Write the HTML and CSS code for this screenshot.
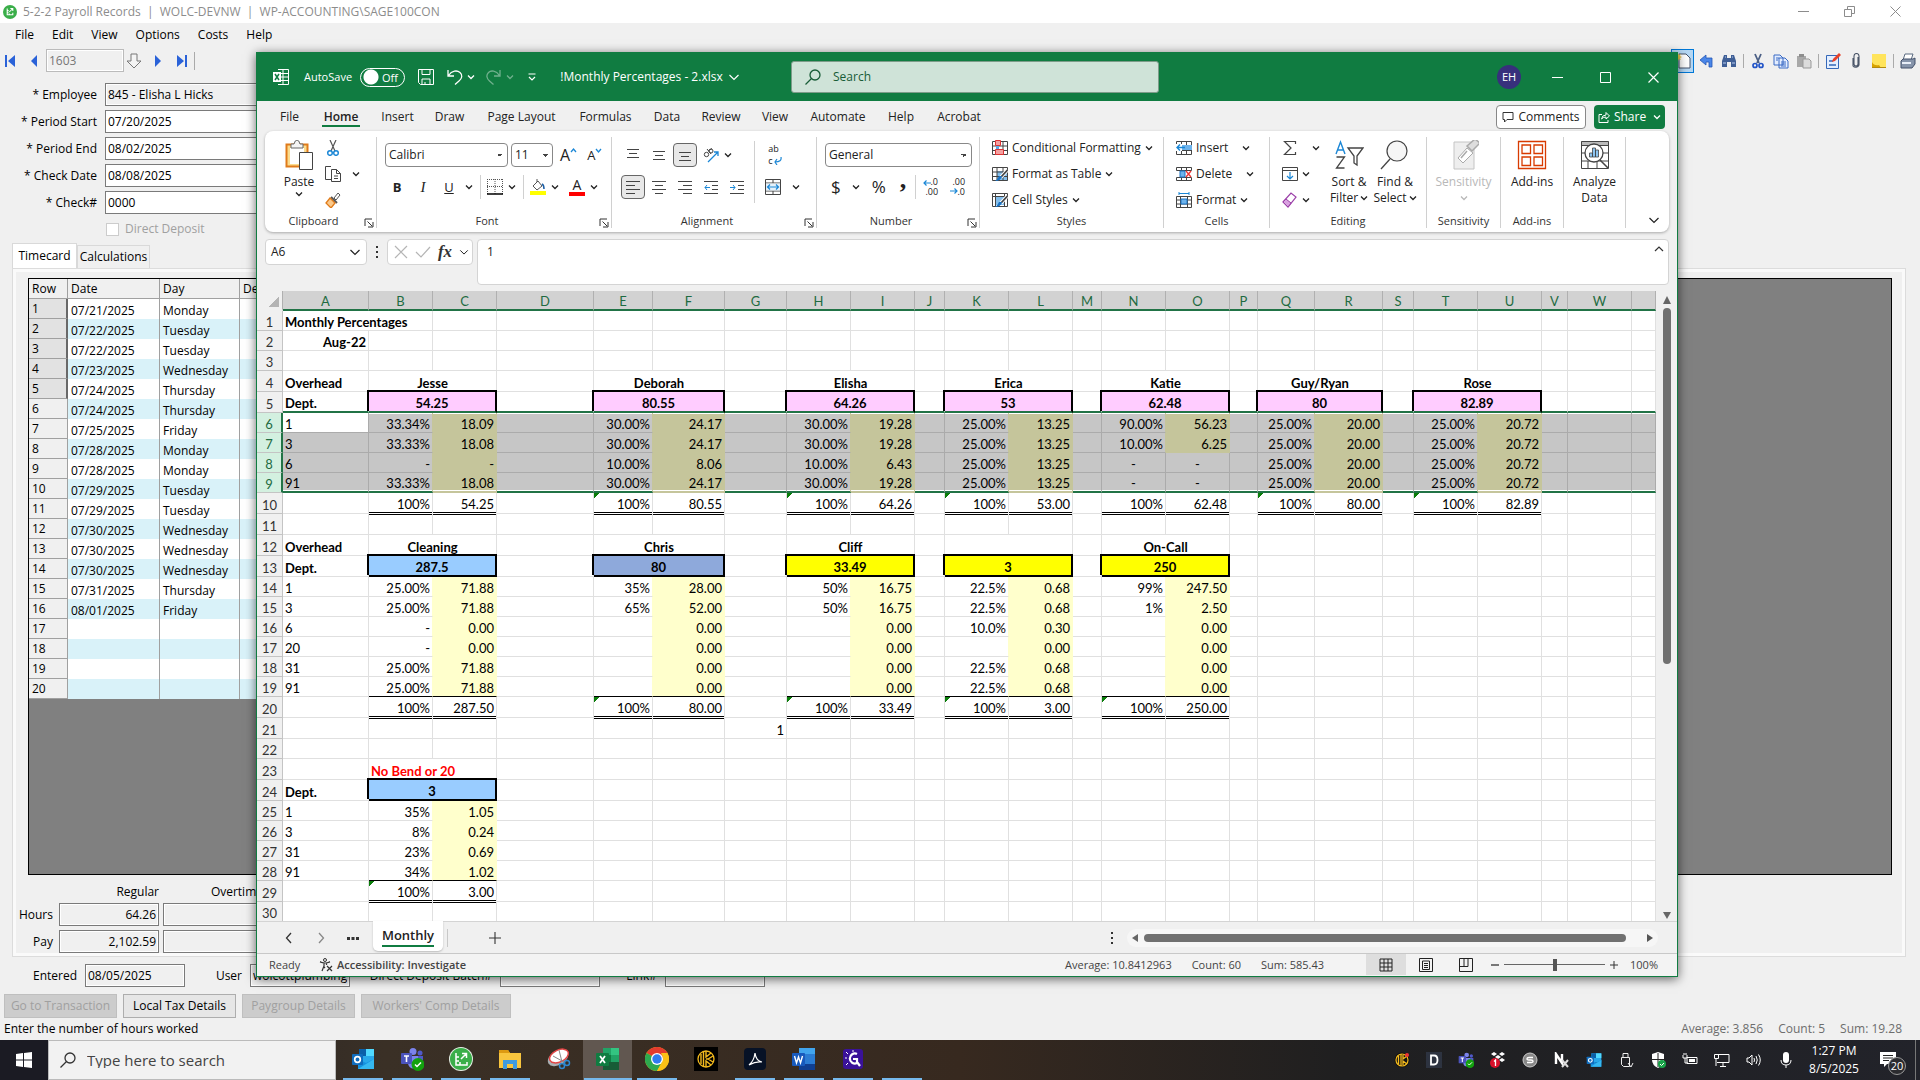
FILE: index.html
```html
<!DOCTYPE html>
<html lang="en">
<head>
<meta charset="utf-8">
<title>5-2-2 Payroll Records</title>
<link rel="stylesheet" href="styles.css">
</head>
<body>
<svg class="defs" aria-hidden="true">
  <symbol id="chev" viewBox="0 0 8 8"><path d="M1 2.5 4 5.5 7 2.5" fill="none" stroke="currentColor" stroke-width="1.3"/></symbol>
  <symbol id="chev-lg" viewBox="0 0 12 12"><path d="M1.500 4 6 8.500 10.500 4" fill="none" stroke="currentColor" stroke-width="1.200"/></symbol>
  <symbol id="launch" viewBox="0 0 10 10"><path d="M1 8V1h7M3.500 3.500 8 8M9 4v5H4" fill="none" stroke="currentColor"/></symbol>
  <symbol id="mag" viewBox="0 0 18 18"><circle cx="11" cy="7" r="5" fill="none" stroke="currentColor" stroke-width="1.300"/><path d="M7.500 10.500 1.500 16.500" stroke="currentColor" stroke-width="1.300"/></symbol>
  <symbol id="sage" viewBox="0 0 20 20"><circle cx="10" cy="10" r="10" fill="#3aae49"/><path d="M6 5v9h8v-3M6 8h2M6 11h2M9 14v-2M9 10l5-5M10.500 5H14v3.500" fill="none" stroke="#fff" stroke-width="1.500"/></symbol>
  <symbol id="outlook" viewBox="0 0 24 24"><path d="M8 2h15v14H8z" fill="#28a8ea"/><path d="M8 2h7v7H8z" fill="#0a5fa8"/><path d="M15 2h8v7h-8z" fill="#50d9ff"/><path d="M7 12l8 4 8-4v10H7z" fill="#1490df"/><path d="M7 22l16-10v10z" fill="#35b8f1"/><rect x="1" y="7" width="11" height="11" rx="1" fill="#0f6cbd"/><circle cx="6.500" cy="12.500" r="2.800" fill="none" stroke="#fff" stroke-width="1.700"/></symbol>
  <symbol id="teams" viewBox="0 0 24 24"><circle cx="13" cy="4.500" r="3.500" fill="#7b83eb"/><circle cx="20" cy="6" r="2.500" fill="#5059c9"/><path d="M8 9h11v7a5 5 0 0 1-11 0z" fill="#7b83eb"/><path d="M18 9h5v5a3 3 0 0 1-5 2z" fill="#5059c9"/><rect x="1" y="6" width="11" height="11" rx="1" fill="#4b53bc"/><path d="M4 9h5M6.500 9v6" stroke="#fff" stroke-width="1.600"/><circle cx="18" cy="17.500" r="6.500" fill="#13a10e"/><path d="M15 17.500l2 2 4-4" fill="none" stroke="#fff" stroke-width="1.500"/></symbol>
</svg>

<main class="payroll">
  <header class="app-title">
    <svg class="i14"><use href="#sage"/></svg>
    <span class="app-name">5-2-2 Payroll Records&nbsp; |&nbsp; WOLC-DEVNW&nbsp; |&nbsp; WP-ACCOUNTING\SAGE100CON</span>
    <div class="win-ctl grey">
      <button aria-label="Minimize"><svg viewBox="0 0 11 11"><path d="M0 5.500h11" stroke="currentColor"/></svg></button>
      <button aria-label="Restore"><svg viewBox="0 0 11 11"><path d="M.5 3.500h7v7h-7zM3.500 3V.5h7v7H8" fill="none" stroke="currentColor"/></svg></button>
      <button aria-label="Close"><svg viewBox="0 0 11 11"><path d="M.5.5l10 10M10.500.5l-10 10" stroke="currentColor"/></svg></button>
    </div>
  </header>
  <nav class="app-menu">
    <button>File</button><button>Edit</button><button>View</button><button>Options</button><button>Costs</button><button>Help</button>
  </nav>
  <div class="app-tools">
    <button aria-label="First"><svg viewBox="0 0 12 12"><path d="M1 0h2v12H1zM11 0v12L4 6z" fill="#2a62d8"/></svg></button>
    <button class="prev" aria-label="Previous"><svg viewBox="0 0 12 12"><path d="M9 0v12L3 6z" fill="#2a62d8"/></svg></button>
    <input class="field rec-no" aria-label="Record" value="1603" readonly>
    <button class="wide" aria-label="Load"><svg viewBox="0 0 16 16"><path d="M5 1h6v7h4l-7 7-7-7h4z" fill="#f4f4f4" stroke="#777"/></svg></button>
    <button aria-label="Next"><svg viewBox="0 0 12 12"><path d="M3 0v12l6-6z" fill="#2a62d8"/></svg></button>
    <button class="prev" aria-label="Last"><svg viewBox="0 0 12 12"><path d="M9 0h2v12H9zM1 0v12l7-6z" fill="#2a62d8"/></svg></button>
    <span class="vsep"></span>
    <div class="right-tools">
      <button class="hot" aria-label="New"><svg viewBox="0 0 16 16"><path d="M4 1h7l4 4v10H4z" fill="#fff" stroke="#44526a"/><path d="M3 0l1 2 2-1-1 2 2 1-2 1 1 2-2-1-1 2-1-2-2 1 1-2-2-1 2-1-1-2 2 1z" fill="#e9c44a"/></svg></button>
      <button aria-label="Undo"><svg viewBox="0 0 16 16"><path d="M2 7l6-5v3h6v9h-3V9H8v3z" fill="#4a86e8" stroke="#2355b5" stroke-width=".8"/></svg></button>
      <button aria-label="Find"><svg viewBox="0 0 16 16"><path d="M3 2h3v3h4V2h3l2 6v6h-5V9H6v5H1V8z" fill="#3f5f96"/><path d="M2 10h3M11 10h3M4 4h1M11 4h1" stroke="#b9cdf0"/></svg></button>
      <span class="vsep"></span>
      <button aria-label="Cut"><svg viewBox="0 0 16 16"><path d="M5 1l4 9M11 1l-4 9" stroke="#4b5f85" stroke-width="1.800"/><circle cx="5" cy="12.500" r="2" fill="none" stroke="#2355c8" stroke-width="1.700"/><circle cx="11" cy="12.500" r="2" fill="none" stroke="#2355c8" stroke-width="1.700"/></svg></button>
      <button aria-label="Copy"><svg viewBox="0 0 16 16"><path d="M1 2h6l3 3v7H1zM6 5h6l3 3v7H6z" fill="#e3edff" stroke="#3a6ac4"/><path d="M8 9h5M8 11h5M8 13h5M3 5h3M3 7h2" stroke="#3a6ac4"/></svg></button>
      <button aria-label="Paste"><svg viewBox="0 0 16 16"><path d="M1 3h9v11H1z" fill="#a8a8a8"/><path d="M3 1h5v3H3z" fill="#8d8d8d"/><path d="M7 6h6l2 2v7H7z" fill="#dcdcdc" stroke="#999"/></svg></button>
      <span class="vsep"></span>
      <button aria-label="Edit"><svg viewBox="0 0 16 16"><path d="M1.500 2.500h12v13h-12z" fill="#e3eeff" stroke="#3568b8"/><path d="M4 8h4M4 12h7" stroke="#3568b8" stroke-width="1.500"/><path d="M7 9l1-3 6-6 2 2-6 6z" fill="#e8412a"/></svg></button>
      <button aria-label="Attach"><svg viewBox="0 0 16 16"><path d="M10 4v7a2 2 0 0 1-4 0V3a2.500 2.500 0 0 1 5 0v9a3.500 3.500 0 0 1-6 1V5" fill="none" stroke="#4a5568" stroke-width="1.100"/></svg></button>
      <button aria-label="Note"><svg viewBox="0 0 16 16"><path d="M1 1h14v14H1z" fill="#ffe45c"/><path d="M1 15V9q2 4 7 3l2 3z" fill="#d9a300"/><path d="M1 14h14v1H1z" fill="#b28a10"/></svg></button>
      <span class="vsep"></span>
      <button aria-label="Print"><svg viewBox="0 0 16 16"><path d="M5 1h8l-2 6H3z" fill="#fff" stroke="#5a6a80"/><path d="M1 8l2-2h10l2-1v6l-3 4H1z" fill="#8694aa" stroke="#43506a"/><path d="M2 10h9" stroke="#e8eef8" stroke-width="2"/></svg></button>
    </div>
  </div>

  <form class="emp-form">
    <label for="emp">* Employee</label><input class="field ro" id="emp" value="845 - Elisha L Hicks" readonly>
    <label for="ps">* Period Start</label><input class="field" id="ps" value="07/20/2025">
    <label for="pe">* Period End</label><input class="field" id="pe" value="08/02/2025">
    <label for="cd">* Check Date</label><input class="field" id="cd" value="08/08/2025">
    <label for="cn">* Check#</label><input class="field" id="cn" value="0000">
    <span></span><label class="dd"><input type="checkbox" disabled>Direct Deposit</label>
  </form>

  <div class="tabs"><button class="on">Timecard</button><button>Calculations</button></div>
  <section class="panel">
    <div class="tc-wrap">
      <table class="tc">
        <colgroup><col class="tc-row"><col class="tc-date"><col class="tc-day"><col></colgroup>
        <thead><tr><th>Row</th><th>Date</th><th>Day</th><th>Description</th></tr></thead>
        <tbody id="timecard"></tbody>
      </table>
    </div>
    <div class="totals">
      <span></span><span class="tot-h">Regular</span><span class="tot-h">Overtime</span>
      <label for="hr">Hours</label><input id="hr" class="field ro num" value="64.26" readonly><input class="field ro" aria-label="Overtime hours" readonly>
      <label for="py">Pay</label><input id="py" class="field ro num" value="2,102.59" readonly><input class="field ro" aria-label="Overtime pay" readonly>
    </div>
  </section>
  <div class="entry">
    <label for="en">Entered</label><input id="en" class="field ro" value="08/05/2025" readonly>
    <label for="us">User</label><input id="us" class="field ro" value="wolcottplumbing" readonly>
    <label for="ba">Direct Deposit Batch#</label><input id="ba" class="field ro" readonly>
    <label for="li">Link#</label><input id="li" class="field ro" readonly>
  </div>
  <div class="actions">
    <button disabled>Go to Transaction</button><button>Local Tax Details</button><button disabled>Paygroup Details</button><button class="w150" disabled>Workers' Comp Details</button>
  </div>
  <footer class="app-status"><span>Enter the number of hours worked</span><span class="stat">Average: 3.856</span><span class="stat">Count: 5</span><span class="stat">Sum: 19.28</span></footer>
</main>

<section class="excel">
  <header class="xl-title">
    <svg class="i16" viewBox="0 0 16 16"><path d="M5 .5h10.500v15H5M5 4.500h10M5 8h10M5 11.500h10M10 .5v15" fill="none" stroke="#fff"/><path d="M0 3h8v10H0z" fill="#fff"/><path d="M2 5l4 6M6 5l-4 6" stroke="#107c41" stroke-width="1.500"/></svg>
    <label class="autosave"><span>AutoSave</span><input type="checkbox" class="sr"><span class="toggle">Off</span></label>
    <button aria-label="Save"><svg class="i16" viewBox="0 0 16 16"><path d="M.5.5h15v15h-13l-2-2zM4 .5v5h8v-5M4 15.500V10h8v5.500M7 15v-2" fill="none" stroke="#fff"/></svg></button>
    <button class="split" aria-label="Undo"><svg class="i16" viewBox="0 0 16 16"><path d="M1 1v6h6M1.500 6.500C5 1.500 10 1 13 3.500s2 6-1 8.500l-4 3.500" fill="none" stroke="#fff" stroke-width="1.300"/></svg><svg class="i8"><use href="#chev"/></svg></button>
    <button class="split dim" aria-label="Redo"><svg class="i16" viewBox="0 0 16 16"><path d="M14 1v6H8M13.500 6.500C10 1.500 5 1 2.500 3.500s-2 6 1 8.500l4 3.500" fill="none" stroke="#fff" stroke-width="1.300"/></svg><svg class="i8"><use href="#chev"/></svg></button>
    <button class="qat" aria-label="Customize"><svg class="i8" viewBox="0 0 8 8"><path d="M.5 1h7M1 4l3 3 3-3" fill="none" stroke="#fff" stroke-width="1.200"/></svg></button>
    <button class="file-name">!Monthly Percentages - 2.xlsx<svg class="i12"><use href="#chev-lg"/></svg></button>
    <label class="xl-search"><svg class="i18"><use href="#mag"/></svg><input type="text" placeholder="Search" aria-label="Search"></label>
    <div class="win-ctl">
      <span class="avatar">EH</span>
      <button aria-label="Minimize"><svg viewBox="0 0 11 11"><path d="M0 5.500h11" stroke="currentColor"/></svg></button>
      <button aria-label="Maximize"><svg viewBox="0 0 11 11"><path d="M.5.5h10v10H.5z" fill="none" stroke="currentColor"/></svg></button>
      <button aria-label="Close"><svg viewBox="0 0 11 11"><path d="M.5.5l10 10M10.500.5l-10 10" stroke="currentColor" stroke-width="1.200"/></svg></button>
    </div>
  </header>

  <nav class="xl-tabs">
    <button>File</button><button class="on">Home</button><button>Insert</button><button>Draw</button><button>Page Layout</button><button>Formulas</button><button>Data</button><button>Review</button><button>View</button><button>Automate</button><button>Help</button><button>Acrobat</button>
    <div class="xl-share">
      <button class="comments"><svg class="i12" viewBox="0 0 12 12"><path d="M1 1.500h10v7H5L2.500 11V8.500H1z" fill="none" stroke="#333"/></svg>Comments</button>
      <button class="share"><svg class="i12" viewBox="0 0 12 12"><path d="M4 3.500H1v8h9V9M3.500 8q.5-4 4.500-4V1.500L11.500 5 8 8V6q-3 0-4.500 2z" fill="none" stroke="#fff"/></svg>Share<svg class="i8"><use href="#chev"/></svg></button>
    </div>
  </nav>

  <div class="ribbon">
    <div class="group g-clip">
      <div class="g-body">
        <button class="big paste"><svg viewBox="0 0 28 30"><path d="M1.500 4.500h21v22h-21z" fill="#fbdc8e" stroke="#e07b1a" stroke-width="2"/><path d="M5 8h14v16H5z" fill="#fff"/><path d="M6 8V4h3q1-4 3-4t3 4h3v4z" fill="#f4f4f4" stroke="#666"/><path d="M14.500 12.500h13v17h-13z" fill="#fff" stroke="#444"/></svg>Paste<svg class="i8"><use href="#chev"/></svg></button>
        <div class="stack">
          <button aria-label="Cut"><svg class="i16" viewBox="0 0 16 16"><path d="M5 0l5 11M11 0L6 11" stroke="#555" stroke-width="1.200"/><circle cx="5" cy="13" r="2.300" fill="none" stroke="#1b87d6" stroke-width="1.500"/><circle cx="11" cy="13" r="2.300" fill="none" stroke="#1b87d6" stroke-width="1.500"/></svg></button>
          <button aria-label="Copy"><svg class="i16" viewBox="0 0 16 16"><path d="M6 13.500H.5V.5H6M6.500 3.500h5l4 4v8h-9zM11.500 3.500v4h4M9 10h4M9 12.500h4" fill="none" stroke="#444"/></svg><svg class="i8 off"><use href="#chev"/></svg></button>
          <button aria-label="Format Painter"><svg class="i16" viewBox="0 0 16 16"><path d="M9 6l4-5 2 2-4 5z" fill="#fff" stroke="#555"/><path d="M6 5l6 6" stroke="#555" stroke-width="2"/><path d="M5 6l5 5-4 5-5-5z" fill="#fbc98a" stroke="#e07b1a" stroke-width="1.300"/></svg></button>
        </div>
      </div>
      <div class="g-label has-launch">Clipboard<svg class="i10"><use href="#launch"/></svg></div>
    </div>
    <div class="group g-font">
      <div class="g-body rows">
        <div class="row"><select aria-label="Font" class="combo w122"><option>Calibri</option></select><select aria-label="Font size" class="combo w42"><option>11</option></select><button class="grow">A<svg class="i8" viewBox="0 0 8 8"><path d="M1 5l2.500-3L6 5" fill="none" stroke="#1b87d6" stroke-width="1.300"/></svg></button><button class="shrink">A<svg class="i8" viewBox="0 0 8 8"><path d="M1 2l2.500 3L6 2" fill="none" stroke="#1b87d6" stroke-width="1.300"/></svg></button></div>
        <div class="row font-row"><button class="bi"><b>B</b></button><button class="bi"><i>I</i></button><button class="bi"><u>U</u></button><svg class="i8"><use href="#chev"/></svg><span class="gsep"></span>
          <button aria-label="Borders"><svg class="i16" viewBox="0 0 16 16"><path d="M.5 0v15M8 0v15M15.500 0v15M0 .5h16M0 7.500h16" stroke="#555" stroke-dasharray="1 1"/><path d="M0 15h16" stroke="#000" stroke-width="1.500"/></svg></button><svg class="i8"><use href="#chev"/></svg><span class="gsep"></span>
          <button aria-label="Fill color"><svg class="i16" viewBox="0 0 16 16"><path d="M3 7l5-5 4 5-5 4zM7 3V0" fill="#fff" stroke="#555"/><path d="M12 5q2 1 2 5" fill="none" stroke="#1b5ea6" stroke-width="1.500"/><path d="M0 12h16v4H0z" fill="#ff0"/></svg></button><svg class="i8"><use href="#chev"/></svg>
          <button aria-label="Font color" class="fcol"><span>A</span></button><svg class="i8"><use href="#chev"/></svg></div>
      </div>
      <div class="g-label has-launch">Font<svg class="i10"><use href="#launch"/></svg></div>
    </div>
    <div class="group g-align">
      <div class="g-body rows">
        <div class="row al"><button aria-label="Top"><svg class="i14" viewBox="0 0 14 14"><path d="M1 1.500h12M3 5.500h8M1 9.500h12" stroke="#444"/></svg></button><button aria-label="Middle"><svg class="i14" viewBox="0 0 14 14"><path d="M1 3.500h12M3 7.500h8M1 11.500h12" stroke="#444"/></svg></button><button class="sel" aria-label="Bottom"><svg class="i14" viewBox="0 0 14 14"><path d="M1 4.500h12M3 8.500h8M1 12.500h12" stroke="#444"/></svg></button><button aria-label="Orientation"><svg class="i16" viewBox="0 0 16 16"><circle cx="3.500" cy="7.500" r="2.200" fill="none" stroke="#444"/><path d="M4 2l4 5M9 1.500L5 4" stroke="#444"/><circle cx="8" cy="4" r="2" fill="none" stroke="#444"/><path d="M5 15L15 5M11 5h4v4" fill="none" stroke="#1b87d6" stroke-width="1.300"/></svg></button><svg class="i8"><use href="#chev"/></svg></div>
        <div class="row al"><button class="sel" aria-label="Left"><svg class="i14" viewBox="0 0 14 14"><path d="M0 1.500h14M0 5.500h9M0 9.500h14M0 13.500h9" stroke="#444"/></svg></button><button aria-label="Center"><svg class="i14" viewBox="0 0 14 14"><path d="M0 1.500h14M3 5.500h8M0 9.500h14M3 13.500h8" stroke="#444"/></svg></button><button aria-label="Right"><svg class="i14" viewBox="0 0 14 14"><path d="M0 1.500h14M5 5.500h9M0 9.500h14M5 13.500h9" stroke="#444"/></svg></button><button aria-label="Outdent"><svg class="i14" viewBox="0 0 14 14"><path d="M0 1.500h14M8 5.500h6M8 9.500h6M0 13.500h14" stroke="#444"/><path d="M6 7.500H1M3 5L1 7.500 3 10" fill="none" stroke="#1b87d6"/></svg></button><button aria-label="Indent"><svg class="i14" viewBox="0 0 14 14"><path d="M0 1.500h14M8 5.500h6M8 9.500h6M0 13.500h14" stroke="#444"/><path d="M0 7.500h5M3 5l2 2.500L3 10" fill="none" stroke="#1b87d6"/></svg></button></div>
      </div>
      <div class="g-side"><button class="wrap" aria-label="Wrap Text"><span class="wrap-txt"><span>ab</span><span>c</span></span><svg class="i8" viewBox="0 0 8 8"><path d="M7 0q1 5-6 5M3 2L1 5l2 3" fill="none" stroke="#1b87d6" stroke-width="1.200"/></svg></button><div class="row"><button aria-label="Merge"><svg class="i16" viewBox="0 0 16 16"><path d="M.5.5h15v15H.5zM.5 4h15M.5 12h15M8 0v4M8 12v4" fill="none" stroke="#444"/><path d="M1 4.500h14v7H1z" fill="#e6f2fb"/><path d="M2 8h12M5 5.500L2.500 8 5 10.500M11 5.500L13.500 8 11 10.500" fill="none" stroke="#1b87d6" stroke-width="1.200"/></svg></button><svg class="i8"><use href="#chev"/></svg></div></div>
      <div class="g-label has-launch">Alignment<svg class="i10"><use href="#launch"/></svg></div>
    </div>
    <div class="group g-num">
      <div class="g-body rows">
        <div class="row"><select aria-label="Number format" class="combo w146"><option>General</option></select></div>
        <div class="row num-row"><button>$</button><svg class="i8"><use href="#chev"/></svg><button>%</button><button class="comma">,</button><span class="gsep"></span><button class="dec"><span>&nbsp;&nbsp;.0<br>.00</span><svg viewBox="0 0 16 16"><path d="M8 4H1M3.500 1.500L1 4l2.500 2.500" fill="none" stroke="#1b87d6" stroke-width="1.200"/></svg></button><button class="dec"><span>.00<br>&nbsp;&nbsp;.0</span><svg viewBox="0 0 16 16"><path d="M0 12h7M4.500 9.500L7 12l-2.500 2.500" fill="none" stroke="#1b87d6" stroke-width="1.200"/></svg></button></div>
      </div>
      <div class="g-label has-launch">Number<svg class="i10"><use href="#launch"/></svg></div>
    </div>
    <div class="group g-styles">
      <div class="g-body list">
        <button><svg class="i16" viewBox="0 0 16 16"><path d="M.5 1.500h15v13H.5zM.5 6h15M.5 10.500h15M5 1.500v13M11 1.500v13" fill="none" stroke="#444"/><path d="M3.500.5h5v5h-5zM3.500 9.500h8v5h-8z" fill="#f4a0a0" stroke="#d33"/><path d="M4 6h3v3H4z" fill="#5aa7e8"/></svg>Conditional Formatting<svg class="i8"><use href="#chev"/></svg></button>
        <button><svg class="i16" viewBox="0 0 16 16"><path d="M5 5h11v10H5z" fill="#83beec"/><path d="M.5 1.500h15v13H.5zM.5 6h15M.5 10.500h15M5 1.500v13M11 1.500v13" fill="none" stroke="#444"/><path d="M15.500 4L9 11" stroke="#fff" stroke-width="3.500"/><path d="M15.500 4L9 11" stroke="#444" stroke-width="1.800"/><path d="M10 10q-1 5-7 5 3-2 4-5z" fill="#1b73c4"/></svg>Format as Table<svg class="i8"><use href="#chev"/></svg></button>
        <button><svg class="i16" viewBox="0 0 16 16"><path d="M4 4h9v9H4z" fill="#83beec"/><path d="M.5 1.500h15v13H.5zM.5 4.500h15M3.500 1.500v13M12.500 1.500v13" fill="none" stroke="#444"/><path d="M15.500 4L9 11" stroke="#fff" stroke-width="3.500"/><path d="M15.500 4L9 11" stroke="#444" stroke-width="1.800"/><path d="M10 10q-1 5-7 5 3-2 4-5z" fill="#1b73c4"/></svg>Cell Styles<svg class="i8"><use href="#chev"/></svg></button>
      </div>
      <div class="g-label">Styles</div>
    </div>
    <div class="group g-cells">
      <div class="g-body list">
        <button><svg class="i16" viewBox="0 0 16 16"><path d="M.5 1.500h15v13H.5zM.5 5.500h15M.5 10.500h15M5.500 1.500v13M10.500 1.500v13" fill="none" stroke="#444"/><path d="M5 5h11v5H5z" fill="#6db3ec"/><path d="M0 4h6v7H0z" fill="#fff"/><path d="M9 7.500H1M4 4.500l-3 3 3 3" fill="none" stroke="#1b87d6" stroke-width="1.400"/></svg><span>Insert</span><svg class="i8 far"><use href="#chev"/></svg></button>
        <button><svg class="i16" viewBox="0 0 16 16"><path d="M.5 1.500h15v3H.5zM.5 11.500h15v3H.5zM5.500 1v3M10.500 1v3M5.500 12v3M10.500 12v3" fill="none" stroke="#444"/><path d="M4 5h5v6H4z" fill="#6db3ec" stroke="#1b73c4"/><path d="M10 5l5 6M15 5l-5 6" stroke="#e33" stroke-width="1.300"/></svg><span>Delete</span><svg class="i8 far"><use href="#chev"/></svg></button>
        <button><svg class="i16" viewBox="0 0 16 16"><path d="M.5 4.500h15v11H.5zM.5 8h15M.5 12h15M4.500 4v11M11.500 4v11" fill="none" stroke="#444"/><path d="M5 7h6v5H5z" fill="#6db3ec" stroke="#1b73c4"/><path d="M3 1.500h10M3 0v3M13 0v3" stroke="#1b87d6"/></svg>Format<svg class="i8"><use href="#chev"/></svg></button>
      </div>
      <div class="g-label">Cells</div>
    </div>
    <div class="group g-edit">
      <div class="g-body">
        <div class="list mini">
          <button aria-label="Sum"><svg class="i16" viewBox="0 0 16 16"><path d="M13.500 4V1.500h-11L9 8l-6.500 6.500h11V12" fill="none" stroke="#444" stroke-width="1.200"/></svg><svg class="i8 far"><use href="#chev"/></svg></button>
          <button aria-label="Fill"><svg class="i16" viewBox="0 0 16 16"><path d="M.5 1.500h15v13H.5zM.5 4.500h15" fill="none" stroke="#444"/><path d="M8 6v7M5 10l3 3 3-3" fill="none" stroke="#1b87d6" stroke-width="1.200"/></svg><svg class="i8"><use href="#chev"/></svg></button>
          <button aria-label="Clear"><svg class="i16" viewBox="0 0 16 16"><path d="M1 10l8-9 5 4-8 10z" fill="#fff" stroke="#9b3fa8" stroke-width="1.200"/><path d="M1 10l3-3 5 4-3 4z" fill="#d9a2e0" stroke="#9b3fa8"/></svg><svg class="i8"><use href="#chev"/></svg></button>
        </div>
        <button class="big w46"><svg viewBox="0 0 30 30"><path d="M2 14L6.500 2 11 14M3.500 10h6" fill="none" stroke="#1b87d6" stroke-width="1.400"/><path d="M2.500 17h8l-8 11h8" fill="none" stroke="#444" stroke-width="1.300"/><path d="M14 8h15l-6 8v9l-3-2v-7z" fill="none" stroke="#444" stroke-width="1.300"/></svg><span>Sort &amp;<br>Filter<svg class="i8"><use href="#chev"/></svg></span></button>
        <button class="big w46"><svg viewBox="0 0 30 30"><circle cx="17" cy="11" r="10" fill="#f6f6f6" stroke="#444" stroke-width="1.200"/><path d="M10 19L1 29" stroke="#444" stroke-width="1.300"/></svg><span>Find &amp;<br>Select<svg class="i8"><use href="#chev"/></svg></span></button>
      </div>
      <div class="g-label">Editing</div>
    </div>
    <div class="group g-sens">
      <div class="g-body"><button class="big" disabled><svg viewBox="0 0 30 30"><path d="M5 2h20v27H5z" fill="#eee" stroke="#c4c4c4"/><path d="M9 18L18 8l6 5-10 10z" fill="#fff" stroke="#aaa"/><path d="M12 18l6-7M18 6l8-7 5 4-8 8z" fill="#ddd" stroke="#aaa" stroke-width="1.500"/></svg><span>Sensitivity<br><svg class="i8"><use href="#chev"/></svg></span></button></div>
      <div class="g-label">Sensitivity</div>
    </div>
    <div class="group g-add">
      <div class="g-body"><button class="big"><svg viewBox="0 0 30 30"><path d="M1.500 1.500h27v27h-27zM5 5h8.500v8.500H5zM17 5h8.500v8.500H17zM5 17h8.500v8.500H5zM17 17h8.500v8.500H17z" fill="none" stroke="#d83b01" stroke-width="1.300"/></svg>Add-ins</button></div>
      <div class="g-label">Add-ins</div>
    </div>
    <div class="group g-ana">
      <div class="g-body"><button class="big"><svg viewBox="0 0 30 30"><path d="M1 1h28v4H1z" fill="#bbb"/><path d="M1.500 1.500h27v27h-27zM1 5.500h28M1 13h28M1 21h28M8 21v8M17 21v8" fill="none" stroke="#444"/><circle cx="14" cy="13" r="9" fill="#fff" stroke="#444" stroke-width="1.300"/><path d="M9.500 13h3v4h-3zM12.500 8h3v9h-3zM15.500 10h3v7h-3z" fill="#8cc4f0" stroke="#444" stroke-width=".8"/><path d="M20 20l8 8" stroke="#444" stroke-width="1.600"/></svg><span>Analyze<br>Data</span></button></div>
    </div>
    <button class="collapse" aria-label="Collapse ribbon"><svg class="i12"><use href="#chev-lg"/></svg></button>
  </div>

  <div class="fbar">
    <button class="namebox">A6<svg class="i12"><use href="#chev-lg"/></svg></button>
    <svg class="dots" viewBox="0 0 4 16"><path d="M1 2h2v2H1zM1 7h2v2H1zM1 12h2v2H1z" fill="#333"/></svg>
    <div class="fxbox"><svg class="i14" viewBox="0 0 14 14"><path d="M1 1l12 12M13 1L1 13" stroke="#b5b5b5" stroke-width="1.200"/></svg><svg class="i16" viewBox="0 0 16 14"><path d="M1 7l5 5L15 2" fill="none" stroke="#b5b5b5" stroke-width="1.200"/></svg><span class="fx">fx</span><svg class="i10"><use href="#chev-lg"/></svg></div>
    <label class="formula"><input type="text" value="1" aria-label="Formula bar"><svg class="i10" viewBox="0 0 10 10"><path d="M1 7l4-4 4 4" fill="none" stroke="#333" stroke-width="1.200"/></svg></label>
  </div>

  <div class="grid-area">
    <table class="sheet">
      <colgroup id="cols"></colgroup>
      <thead id="sheet-head"></thead>
      <tbody id="sheet-body"></tbody>
    </table>
    <div class="vscroll"><svg class="i10" viewBox="0 0 10 10"><path d="M5 1l4 8H1z" fill="#666"/></svg><span class="vthumb"></span><svg class="i10 end" viewBox="0 0 10 10"><path d="M5 9L1 2h8z" fill="#666"/></svg></div>
  </div>

  <div class="sheet-tabs">
    <button aria-label="Previous sheet"><svg class="i12" viewBox="0 0 12 12"><path d="M8 1L3.500 6 8 11" fill="none" stroke="#333" stroke-width="1.300"/></svg></button>
    <button aria-label="Next sheet"><svg class="i12" viewBox="0 0 12 12"><path d="M4 1l4.500 5L4 11" fill="none" stroke="#888" stroke-width="1.300"/></svg></button>
    <button aria-label="All sheets"><svg class="i12" viewBox="0 0 12 12"><path d="M0 5h3v3H0zM4.500 5h3v3h-3zM9 5h3v3H9z" fill="#333"/></svg></button>
    <button class="tab-on"><span>Monthly</span></button><span class="tsep"></span>
    <button class="plus" aria-label="New sheet"><svg class="i12" viewBox="0 0 12 12"><path d="M6 0v12M0 6h12" stroke="#333" stroke-width="1.100"/></svg></button>
    <div class="hscroll"><svg class="dots" viewBox="0 0 4 16"><path d="M1 2h2v2H1zM1 7h2v2H1zM1 12h2v2H1z" fill="#333"/></svg><div class="htrack"><svg class="i10" viewBox="0 0 10 10"><path d="M2 5l6-4v8z" fill="#666"/></svg><span class="hthumb"></span><svg class="i10" viewBox="0 0 10 10"><path d="M8 5L2 1v8z" fill="#555"/></svg></div></div>
  </div>
  <footer class="xl-status">
    <span class="ready">Ready</span>
    <svg class="i14" viewBox="0 0 14 14"><circle cx="6" cy="2" r="1.500" fill="none" stroke="#333"/><path d="M1 4l4 1v3l-2 5M11 4L7.500 5v2M1 4q5 2 10 0M6 9l-1 1" fill="none" stroke="#333" stroke-width="1.200"/><path d="M8 8l5 5M13 8l-5 5" stroke="#333" stroke-width="1.200"/></svg>
    <span class="acc">Accessibility: Investigate</span>
    <div class="xl-stats"><span>Average: 10.8412963</span><span>Count: 60</span><span>Sum: 585.43</span></div>
    <button class="view on" aria-label="Normal"><svg class="i14" viewBox="0 0 14 14"><path d="M1 1h12v12H1zM1 5h12M1 9h12M5 1v12M9 1v12" fill="none" stroke="#222"/></svg></button>
    <button class="view" aria-label="Page layout"><svg class="i14" viewBox="0 0 14 14"><path d="M.5.5h13v13H.5zM3.500 3h7v8.500h-7zM5 5.500h4M5 7.500h4M5 9.500h4" fill="none" stroke="#222"/></svg></button>
    <button class="view" aria-label="Page break"><svg class="i14" viewBox="0 0 14 14"><path d="M.5.5h13v13H.5zM5 .5v8M9 .5v8M.5 8.500H9" fill="none" stroke="#222"/></svg></button>
    <svg class="i8" viewBox="0 0 8 8"><path d="M0 4h8" stroke="#333" stroke-width="1.300"/></svg>
    <input class="zoom" type="range" min="0" max="100" value="50" aria-label="Zoom">
    <svg class="i8" viewBox="0 0 8 8"><path d="M0 4h8M4 0v8" stroke="#333"/></svg>
    <span class="pct">100%</span>
  </footer>
</section>

<nav class="taskbar">
  <button class="start" aria-label="Start"><svg class="i16" viewBox="0 0 16 16"><path d="M0 2l7-1v6.500H0zM8 1l8-1v7.500H8zM0 8.500h7V15l-7-1zM8 8.500h8V16l-8-1z" fill="#fff"/></svg></button>
  <label class="tb-search"><svg class="i18"><use href="#mag"/></svg><input type="text" placeholder="Type here to search" aria-label="Type here to search"></label>
  <button class="run" aria-label="Outlook"><svg><use href="#outlook"/></svg></button>
  <button class="run" aria-label="Teams"><svg><use href="#teams"/></svg></button>
  <button class="run" aria-label="Sage"><svg viewBox="0 0 24 24"><circle cx="12" cy="12" r="12" fill="#e6efe6"/><circle cx="12" cy="12" r="11" fill="#3aae49"/><path d="M7 6v12h11v-3M7 10h3M7 14h3M11 18v-3M12 12l5-5M13 6.500h4.500V11" fill="none" stroke="#fff" stroke-width="1.500"/></svg></button>
  <button class="run" aria-label="Explorer"><svg viewBox="0 0 24 24"><path d="M1 3h9l2 3h11v15H1z" fill="#f8c53e"/><path d="M1 3h9l2 3H1z" fill="#dd9a12"/><path d="M5 22v-9h14v9h-4v-5H9v5z" fill="#3f9be0"/></svg></button>
  <button aria-label="Snipping Tool"><svg viewBox="0 0 24 24"><ellipse cx="11" cy="11" rx="11" ry="7" transform="rotate(-30 11 11)" fill="#a9b0b4"/><ellipse cx="12" cy="9" rx="10" ry="6" transform="rotate(-25 12 9)" fill="#fff" stroke="#e24545" stroke-width="1.500"/><path d="M12 3l3 12M6 9l11 6" stroke="#888"/><circle cx="15" cy="19" r="2.500" fill="none" stroke="#2f88d0" stroke-width="1.500"/><circle cx="20" cy="16" r="2.500" fill="none" stroke="#2f88d0" stroke-width="1.500"/></svg></button>
  <button class="run active" aria-label="Excel"><svg viewBox="0 0 24 24"><path d="M7 1h16v22H7z" fill="#21a366"/><path d="M15 1h8v7h-8z" fill="#33c481"/><path d="M7 8h8v7H7z" fill="#107c41"/><path d="M7 15h16v8H7z" fill="#185c37"/><rect y="6" width="13" height="13" rx="1" fill="#107c41"/><path d="M4 9l5 7M9 9l-5 7" stroke="#fff" stroke-width="1.800"/></svg></button>
  <button class="run" aria-label="Chrome"><svg viewBox="0 0 24 24"><circle cx="12" cy="12" r="12" fill="#fbc116"/><path d="M12 12L1.600 6A12 12 0 0 1 22.400 6z" fill="#e33b2e"/><path d="M12 12L1.600 6A12 12 0 0 0 12 24l5-9z" fill="#2da94f"/><path d="M12 6h10.400L17 12z" fill="#e33b2e"/><path d="M22.400 6A12 12 0 0 1 12 24l5-9q2-4-1-9z" fill="#fbc116"/><circle cx="12" cy="12" r="6" fill="#fff"/><circle cx="12" cy="12" r="4.700" fill="#2f7cf0"/></svg></button>
  <button aria-label="Keeper"><svg viewBox="0 0 24 24"><path d="M0 0h24v24H0z" fill="#000"/><circle cx="12" cy="12" r="8" fill="none" stroke="#f5bb1d" stroke-width="1.300"/><path d="M7 7v10M9.500 5v14M12 4v6l5-4M12 20v-6l5 4M12 12h2l5-3M14 12l5 3" fill="none" stroke="#f5bb1d" stroke-width="1.400"/></svg></button>
  <button class="run" aria-label="Acrobat"><svg viewBox="0 0 24 24"><rect x="1" y="1" width="22" height="22" rx="4" fill="#071226"/><path d="M6 18q5-4 6-12 1 8 7 9-6-1-13 3z" fill="none" stroke="#fff" stroke-width="1.200"/></svg></button>
  <button class="run" aria-label="Word"><svg viewBox="0 0 24 24"><path d="M7 1h16v22H7z" fill="#2b7cd3"/><path d="M7 1h16v6H7z" fill="#41a5ee"/><path d="M7 17h16v6H7z" fill="#103f91"/><rect y="6" width="13" height="13" rx="1" fill="#185abd"/><path d="M2.500 9l2 7 2-6 2 6 2-7" fill="none" stroke="#fff" stroke-width="1.400"/></svg></button>
  <button class="run" aria-label="Greenshot"><svg viewBox="0 0 24 24"><rect x="2" y="2" width="20" height="20" rx="3" fill="#3a1299"/><path d="M16 7a5 5 0 1 0 0 9v-4h-4M16 15l3 4" fill="none" stroke="#fff" stroke-width="2.200"/><path d="M5 5l2 2M12 3v2M4 11h2M5 18l2-2" stroke="#fff"/></svg></button>
  <button class="run" aria-label="Window"></button>
  <div class="tray">
    <svg viewBox="0 0 16 16"><circle cx="8" cy="8" r="7.500" fill="#111"/><circle cx="8" cy="8" r="6" fill="none" stroke="#f5bb1d" stroke-width="1.200"/><path d="M4.500 4v8M7 2v12M9 3v4l4-3M9 13V9l4 3" fill="none" stroke="#f5bb1d" stroke-width="1.300"/><circle cx="13" cy="3" r="2" fill="#e33"/></svg>
    <svg viewBox="0 0 16 16"><path d="M0 0h16v16H0z" fill="#2d3340"/><path d="M5 3.500h3q3.500 0 3.500 4.500T8 12.500H5z" fill="none" stroke="#fff" stroke-width="1.800"/></svg>
    <svg><use href="#teams"/></svg>
    <svg viewBox="0 0 16 16"><path d="M4 0l3 2-3 2-3-2zM12 0l3 2-3 2-3-2zM8 3l3 2-3 2-3-2zM12 6l3 2-3 2-3-2z" fill="#fff"/><circle cx="5" cy="11" r="5" fill="#d8102a"/><path d="M4 9.500L5.500 8v6" fill="none" stroke="#fff" stroke-width="1.300"/></svg>
    <svg viewBox="0 0 16 16"><circle cx="8" cy="8" r="7" fill="#888" stroke="#ccc"/><path d="M11 5.500H7q-2 0-2 1.300T7 8h2q2 0 2 1.300t-2 1.200H5" fill="none" stroke="#fff" stroke-width="1.400"/></svg>
    <svg viewBox="0 0 16 16"><path d="M2 12V2l6 9V2" fill="none" stroke="#fff" stroke-width="2.400"/><path d="M8 8l6 7M14 8l-6 7" stroke="#ddd" stroke-width="2"/></svg>
    <svg><use href="#outlook"/></svg>
    <svg viewBox="0 0 16 16"><path d="M5 1.500h5v4H5zM3.500 5.500h8v9h-6l-2-2zM10 11l3 4 2-4" fill="none" stroke="#eee"/></svg>
    <svg viewBox="0 0 16 16"><path d="M8 0l6 2v6q0 5-6 8-6-3-6-8V2z" fill="#fff"/><path d="M8 1v14M2 7.500h12" stroke="#222"/><circle cx="12" cy="12" r="4" fill="#18a349"/><path d="M10 12l1.500 1.500L14 11" fill="none" stroke="#fff"/></svg>
    <svg viewBox="0 0 16 16"><path d="M5 5.500h10v6H5zM1 3v3h4V3M2 1v2M4 1v2M3 6v5h3" fill="none" stroke="#fff"/><path d="M7 7h6v3H7z" fill="#fff"/></svg>
    <svg viewBox="0 0 16 16"><path d="M3 2.500h12v8H3M9 11v3M6 14.500h6M.5 2.500h4v4h-4zM2 7v7" fill="none" stroke="#fff"/></svg>
    <svg viewBox="0 0 16 16"><path d="M1 6v4h2l3 3V3L3 6zM8 6q1 2 0 4M10 4q2.500 4 0 8M12.500 2.500q3.500 5.500 0 11" fill="none" stroke="#fff"/></svg>
    <svg viewBox="0 0 16 16"><rect x="5" width="6" height="11" rx="3" fill="#fff"/><path d="M3 8q0 5 5 5t5-5M8 13v3" fill="none" stroke="#fff"/></svg>
    <div class="clock"><span>1:27 PM</span><span>8/5/2025</span></div>
    <div class="notif"><svg viewBox="0 0 16 16"><path d="M0 0h16v12H7l-3 3v-3H0z" fill="#fff"/><path d="M3 3.500h10M3 6h10M3 8.500h6" stroke="#222"/></svg><span class="badge">20</span></div>
  </div>
</nav>
<script src="sheet.js"></script>
</body>
</html>
```
FILE: sheet.js
```js
const el = (tag, cls, text) => {
  const n = document.createElement(tag);
  if (cls) n.className = cls;
  if (text) n.textContent = text;
  return n;
};

/* Timecard lines */
const days = [
  ['07/21/2025', 'Monday'], ['07/22/2025', 'Tuesday'], ['07/22/2025', 'Tuesday'], ['07/23/2025', 'Wednesday'],
  ['07/24/2025', 'Thursday'], ['07/24/2025', 'Thursday'], ['07/25/2025', 'Friday'], ['07/28/2025', 'Monday'],
  ['07/28/2025', 'Monday'], ['07/29/2025', 'Tuesday'], ['07/29/2025', 'Tuesday'], ['07/30/2025', 'Wednesday'],
  ['07/30/2025', 'Wednesday'], ['07/30/2025', 'Wednesday'], ['07/31/2025', 'Thursday'], ['08/01/2025', 'Friday']
];
const tc = document.getElementById('timecard');
for (let i = 0; i < 20; i++) {
  const tr = el('tr');
  tr.append(el('th', i < 5 ? 'picked' : '', String(i + 1)));
  const [date, day] = days[i] || ['', ''];
  tr.append(el('td', '', date), el('td', '', day), el('td'));
  tc.append(tr);
}

/* Worksheet */
const letters = 'ABCDEFGHIJKLMNOPQRSTUVW'.split('').concat('');
const widths = [86, 64, 64, 97, 59, 72, 62, 64, 64, 30, 64, 64, 29, 64, 64, 28, 57, 68, 31, 64, 64, 26, 64];
const tall = [4, 5, 10, 11, 12, 13, 20, 21, 23, 24, 29];
const cells = {};
const put = (ref, text, cls = '', span = 1) => { cells[ref] = { text, cls, span }; };

/* One block: header name, boxed total, percentage column, value column, sum line */
function block(row, col, name, total, fill, pct, val, sum, flagged) {
  const next = letters[letters.indexOf(col) + 1];
  put(col + row, name, 'b c', 2);
  put(col + (row + 1), total, 'b c box ' + fill, 2);
  pct.forEach((p, i) => {
    const last = i === pct.length - 1 && row !== 4 ? ' last' : '';
    const noFill = val[i] === '·';
    put(col + (row + 2 + i), noFill ? '-' : p, (noFill ? 'c' : 'r') + last);
    put(next + (row + 2 + i), noFill ? '-' : val[i], (noFill ? 'c' : 'r calc') + last);
  });
  const end = row + 2 + pct.length;
  put(col + end, '100%', 'r sum' + (flagged ? ' flag' : ''));
  put(next + end, sum, 'r sum');
}
const same = (v, n) => Array(n).fill(v);
block(4, 'B', 'Jesse', '54.25', 'pink', ['33.34%', '33.33%', '-', '33.33%'], ['18.09', '18.08', '-', '18.08'], '54.25');
block(4, 'E', 'Deborah', '80.55', 'pink', ['30.00%', '30.00%', '10.00%', '30.00%'], ['24.17', '24.17', '8.06', '24.17'], '80.55', true);
block(4, 'H', 'Elisha', '64.26', 'pink', ['30.00%', '30.00%', '10.00%', '30.00%'], ['19.28', '19.28', '6.43', '19.28'], '64.26', true);
block(4, 'K', 'Erica', '53', 'pink', same('25.00%', 4), same('13.25', 4), '53.00', true);
block(4, 'N', 'Katie', '62.48', 'pink', ['90.00%', '10.00%', '', ''], ['56.23', '6.25', '·', '·'], '62.48');
block(4, 'Q', 'Guy/Ryan', '80', 'pink', same('25.00%', 4), same('20.00', 4), '80.00', true);
block(4, 'T', 'Rose', '82.89', 'pink', same('25.00%', 4), same('20.72', 4), '82.89', true);
block(12, 'B', 'Cleaning', '287.5', 'blue', ['25.00%', '25.00%', '-', '-', '25.00%', '25.00%'], ['71.88', '71.88', '0.00', '0.00', '71.88', '71.88'], '287.50');
block(12, 'E', 'Chris', '80', 'slate', ['35%', '65%', '', '', '', ''], ['28.00', '52.00', '0.00', '0.00', '0.00', '0.00'], '80.00', true);
block(12, 'H', 'Cliff', '33.49', 'yellow', ['50%', '50%', '', '', '', ''], ['16.75', '16.75', '0.00', '0.00', '0.00', '0.00'], '33.49', true);
block(12, 'K', '', '3', 'yellow', ['22.5%', '22.5%', '10.0%', '', '22.5%', '22.5%'], ['0.68', '0.68', '0.30', '0.00', '0.68', '0.68'], '3.00', true);
block(12, 'N', 'On-Call', '250', 'yellow', ['99%', '1%', '', '', '', ''], ['247.50', '2.50', '0.00', '0.00', '0.00', '0.00'], '250.00', true);
block(23, 'B', 'No Bend or 20', '3', 'blue', ['35%', '8%', '23%', '34%'], ['1.05', '0.24', '0.69', '1.02'], '3.00', true);
put('B23', 'No Bend or 20', 'b red', 2);
put('A1', 'Monthly Percentages', 'b', 2);
put('A2', 'Aug-22', 'b r');
put('G21', '1', 'r');
[[4, 'Overhead'], [5, 'Dept.'], [12, 'Overhead'], [13, 'Dept.'], [24, 'Dept.']].forEach(([r, t]) => put('A' + r, t, 'b'));
[[6, 1], [7, 3], [8, 6], [9, 91], [14, 1], [15, 3], [16, 6], [17, 20], [18, 31], [19, 91], [25, 1], [26, 3], [27, 31], [28, 91]]
  .forEach(([r, t]) => put('A' + r, String(t), r === 6 ? 'active' : ''));

const cols = document.getElementById('cols');
cols.append(el('col', 'rowhead'));
letters.forEach((l, i) => {
  const c = el('col');
  if (widths[i]) c.style.width = widths[i] + 'px';
  cols.append(c);
});
const head = el('tr');
head.append(el('th', 'corner'));
letters.forEach(l => head.append(el('th', '', l)));
document.getElementById('sheet-head').append(head);

const body = document.getElementById('sheet-body');
for (let r = 1; r <= 30; r++) {
  const tr = el('tr', [tall.includes(r) && 'tall', r >= 6 && r <= 9 && 'picked', r === 5 && 'above', r === 6 && 'first', r === 9 && 'final'].filter(Boolean).join(' '));
  tr.append(el('th', '', String(r)));
  for (let i = 0; i < letters.length; i++) {
    const c = cells[letters[i] + r];
    const td = el('td', c ? c.cls : '', c ? c.text : '');
    if (c && c.span > 1) { td.colSpan = c.span; i += c.span - 1; }
    tr.append(td);
  }
  body.append(tr);
}
```
FILE: styles.css
```css
* { box-sizing: border-box; }
html, body { height: 100%; margin: 0; }
body { display: flex; flex-direction: column; position: relative; overflow: hidden; min-height: 900px; background: #f0f0f0; color: #000; font: 12px/16px "Open Sans", "Noto Sans", sans-serif; }
button, input, select { font: inherit; color: inherit; margin: 0; }
button { border: 0; background: none; padding: 0; display: inline-flex; align-items: center; justify-content: center; white-space: nowrap; }
svg { flex: none; display: block; }
.defs { position: absolute; width: 0; height: 0; }
.i8 { width: 8px; height: 8px; }
.i10 { width: 10px; height: 10px; }
.i12 { width: 12px; height: 12px; }
.i14 { width: 14px; height: 14px; }
.i16 { width: 16px; height: 16px; }
.i18 { width: 18px; height: 18px; }

/* Payroll window */
.payroll { flex: 1; display: flex; flex-direction: column; min-height: 0; }
.app-title { display: flex; align-items: center; gap: 6px; height: 23px; padding-left: 3px; background: #fff; color: #8c8c8c; }
.app-name { white-space: nowrap; }
.win-ctl { display: flex; align-items: center; margin-left: auto; }
.win-ctl button { width: 48px; height: 23px; }
.win-ctl button svg { width: 11px; height: 11px; }
.win-ctl.grey { padding-right: 2px; }
.win-ctl.grey button { width: 46px; }
.app-menu { display: flex; height: 23px; padding-left: 6px; }
.app-menu button { padding: 0 9px; }
.app-tools { display: flex; align-items: center; height: 29px; padding-left: 4px; }
.app-tools > button { width: 12px; height: 24px; margin-right: 12px; }
.app-tools > button svg { width: 12px; height: 12px; }
.app-tools > .prev { margin-right: 6px; }
.app-tools > .wide { width: 16px; margin: 0 10px 0 2px; }
.app-tools > .wide svg { width: 16px; height: 16px; }
.app-tools .vsep { width: 1px; height: 18px; background: #aaa; }
.field { height: 23px; padding: 0 2px; border: 1px solid #7a7a7a; background: #fff; border-radius: 0; min-width: 0; }
.field.ro, .rec-no { background: #f0f0f0; box-shadow: inset 0 0 0 1px #fff; }
.field.rec-no { width: 78px; color: #777; border-color: #bbb; background: #f0f0f0; }
.right-tools { display: flex; align-items: center; margin-left: auto; padding-right: 1px; }
.right-tools button { width: 23px; height: 24px; }
.right-tools svg { width: 16px; height: 16px; }
.app-tools .right-tools .vsep { height: 14px; margin: 0 2px 0 3px; }
.right-tools .hot { background: #b5d7f3; border: 1px solid #0078d7; }
.emp-form { display: grid; grid-template-columns: 97px 420px; column-gap: 8px; row-gap: 4px; padding-top: 8px; align-items: center; }
.emp-form > label:not(.dd) { text-align: right; }
.dd { display: flex; align-items: center; gap: 6px; color: #a0a0a0; padding-top: 3px; }
.dd input { appearance: none; width: 13px; height: 13px; margin-left: 1px; border: 1px solid #ccc; background: #fff; }
.tabs { display: flex; align-items: flex-end; padding-left: 12px; height: 31px; }
.tabs button { height: 23px; width: 73px; border: 1px solid #d9d9d9; border-bottom: 0; }
.tabs .on { height: 25px; width: 65px; background: #fff; }
.panel { margin: 0 14px 0 12px; padding: 9px 13px 3px 15px; height: 689px; border: 1px solid #dcdcdc; background: #f0f0f0; box-shadow: inset 0 0 0 3px #fafafa; display: flex; flex-direction: column; }
.tc-wrap { flex: 1; border: 1px solid #000; background: #808080; min-height: 0; }
.tc { table-layout: fixed; width: 600px; border-spacing: 0; }
.tc-row { width: 39px; } .tc-date { width: 92px; } .tc-day { width: 80px; }
.tc th { height: 20px; padding: 0 3px; background: #f0f0f0; font-weight: normal; text-align: left; border: solid #a0a0a0; border-width: 0 1px 1px 0; }
.tc tbody .picked { background: #e2e2e2; border-right: 2px solid #696969; }
.tc td { height: 20px; padding: 3px 3px 0; line-height: 16px; border-right: 1px solid #a0a0a0; background: #fff; }
.tc tr:nth-child(even) td { background: #d9f2f9; }
.totals { display: grid; grid-template-columns: 37px 100px 100px; grid-template-rows: 14px 23px 23px; gap: 4px; height: 78px; margin-left: -10px; padding-top: 10px; align-items: center; }
.totals label { padding-right: 2px; text-align: right; white-space: nowrap; }
.tot-h { text-align: right; line-height: 14px; }
.num { text-align: right; }
.entry { display: grid; grid-template-columns: 77px 100px 49px 100px 134px 100px 49px 100px; column-gap: 8px; padding-top: 7px; align-items: center; }
.entry label { text-align: right; white-space: nowrap; }
.actions { display: flex; gap: 6px; padding: 7px 4px 0; }
.actions button { width: 113px; height: 24px; border: 1px solid #adadad; background: #e6e6e6; }
.actions button:disabled { background: #ccc; border-color: #bfbfbf; color: #a0a0a0; }
.actions .w150 { width: 150px; }
.app-status { display: flex; align-items: center; flex: 1; gap: 15px; padding: 0 18px 0 4px; }
.app-status span:first-child { margin-right: auto; }
.stat { color: #6d6d6d; }

/* Excel window */
.excel { position: absolute; left: 256px; right: 242px; top: 52px; bottom: 103px; display: flex; flex-direction: column; border: 1px solid #107c41; background: #f0f0f0; box-shadow: 0 2px 10px rgba(0,0,0,.6); color: #222; }
.xl-title { display: flex; align-items: center; height: 48px; padding-left: 16px; background: #107c41; color: #fff; }
.autosave { display: flex; align-items: center; margin-left: 15px; width: 114px; font-size: 11px; }
.sr { position: absolute; opacity: 0; width: 1px; height: 1px; }
.toggle { width: 45px; height: 19px; margin-left: auto; margin-right: 13px; border: 1px solid #fff; border-radius: 10px; padding-left: 21px; line-height: 17px; background: radial-gradient(circle at 10px 8px, #fff 7px, transparent 8px); }
.split { gap: 4px; margin-left: 13px; }
.split + .split { margin-left: 11px; }
.dim { opacity: .4; }
.qat { margin-left: 14px; }
.file-name { margin-left: 27px; width: 174px; gap: 5px; }
.xl-search { display: flex; align-items: center; gap: 11px; width: 368px; height: 32px; margin-left: 54px; padding-left: 12px; border: 1px solid #7d9c89; border-radius: 3px; background: #cfe3d8; color: #185c37; }
.xl-search input { border: 0; background: none; width: 200px; padding: 0; }
.xl-search input::placeholder { color: #185c37; opacity: 1; }
.avatar { width: 24px; height: 24px; border-radius: 50%; background: #37307c; font-size: 11px; line-height: 24px; text-align: center; margin-right: 12px; }
.xl-tabs { display: grid; grid-template-columns: 43px 60px 53px 51px 93px 75px 48px 60px 48px 78px 48px 68px 1fr; height: 30px; padding: 2px 12px 0 11px; align-items: center; }
.xl-tabs > button { height: 28px; position: relative; }
.xl-tabs .on { font-weight: 600; }
.xl-tabs .on::after { content: ""; position: absolute; left: 11px; right: 11px; bottom: 4px; height: 2px; background: #107c41; }
.xl-share { display: flex; gap: 8px; justify-content: flex-end; }
.xl-share button { height: 24px; gap: 4px; border-radius: 4px; }
.comments { width: 90px; border: 1px solid #888; background: #fff; }
.share { width: 71px; background: #107c41; color: #fff; }
.share .i8 { margin-left: 3px; }

.ribbon { display: flex; height: 101px; margin: 0 8px; padding: 6px 0 4px; border-radius: 8px; background: #fff; box-shadow: 0 1px 3px rgba(0,0,0,.3); }
.group { position: relative; display: grid; grid-template-columns: 1fr auto; grid-template-rows: 1fr 14px; border-right: 1px solid #d0d0d0; }
.g-body { display: flex; min-width: 0; }
.rows { flex-direction: column; gap: 8px; padding-top: 6px; }
.row { display: flex; align-items: center; height: 24px; }
.g-label { grid-column: 1 / -1; text-align: center; font-size: 11px; line-height: 14px; margin-bottom: 2px; color: #333; }
.has-launch { padding-right: 14px; }
.g-label .i10 { position: absolute; right: 2px; bottom: 0; }
.g-clip { width: 112px; } .g-font { width: 235px; } .g-align { width: 205px; } .g-num { width: 163px; } .g-styles { width: 184px; }
.g-cells { width: 106px; } .g-edit { width: 157px; } .g-sens { width: 74px; } .g-add { width: 63px; } .g-ana { width: 62px; }
.big { flex: 1; flex-direction: column; justify-content: flex-start; padding-top: 3px; }
.big > svg:first-child { width: 30px; height: 30px; margin-bottom: 4px; }
.big span { display: block; }
.big span .i8 { display: inline-block; margin-left: 2px; }
.big:disabled { color: #b8b8b8; }
.paste { flex: none; width: 48px; margin-left: 10px; }
.stack { display: flex; flex-direction: column; gap: 10px; margin-left: 2px; padding-top: 3px; align-items: flex-start; }
.stack .off { margin-left: 11px; }
.w46 { flex: none; width: 46px; }
.combo { appearance: none; height: 24px; padding: 0 3px; border: 1px solid #888; border-radius: 4px; color: #222; background-color: #fff; background-image: linear-gradient(45deg, transparent 50%, #444 50%), linear-gradient(-45deg, transparent 50%, #444 50%); background-size: 3px 3px; background-repeat: no-repeat; background-position: right 7px center, right 4px center; }
.w122 { width: 123px; margin-left: 8px; } .w42 { width: 42px; margin-left: 3px; } .w146 { width: 147px; margin-left: 8px; }
.grow { margin-left: 7px; font-size: 16px; align-items: flex-start; line-height: 24px; }
.shrink { margin-left: 9px; font-size: 13px; align-items: flex-start; line-height: 24px; }
.grow svg, .shrink svg { margin-top: 4px; }
.font-row { padding-left: 9px; gap: 4px; }
.font-row > .i8 { margin: 0 1px; }
.bi { width: 22px; height: 24px; font-size: 13px; }
.bi i { font-family: "Liberation Serif", serif; font-size: 15px; }
.gsep { width: 1px; height: 24px; background: #d0d0d0; margin: 0 2px; }
.fcol { margin-left: 5px; }
.fcol span { display: block; width: 16px; height: 17px; border-bottom: 4px solid #f00; font-size: 14px; line-height: 12px; }
.al { padding-left: 8px; }
.al button { width: 26px; height: 24px; }
.al .sel { width: 24px; margin: 0 1px; border: 1px solid #666; border-radius: 4px; background: #e8e8e8; }
.g-side { display: flex; flex-direction: column; gap: 8px; width: 62px; height: 62px; margin-top: 4px; padding: 2px 0 0 10px; border-left: 1px solid #d0d0d0; }
.g-side .row { gap: 11px; }
.wrap { width: 20px; height: 24px; align-items: flex-end; font-size: 9px; line-height: 12px; }
.wrap-txt { display: flex; flex-direction: column; align-items: flex-start; }
.wrap svg { margin: 0 0 2px -5px; }
.num-row { padding-left: 14px; font-size: 17px; }
.num-row > svg { margin: 0 12px 0 11px; }
.num-row .gsep { margin: 0 4px; }
.comma { font: bold 26px/10px "Liberation Serif", serif; margin: 0 5px 0 14px; padding-bottom: 14px; }
.dec { position: relative; width: 17px; height: 20px; margin: 0 3px; font-size: 9px; line-height: 10px; }
.dec + .dec { margin-left: 7px; }
.dec svg { position: absolute; inset: 1px auto auto 0; width: 16px; height: 18px; }
.list { flex-direction: column; gap: 10px; padding: 3px 0 0 12px; }
.list button { justify-content: flex-start; gap: 4px; height: 16px; }
.list .far { margin-left: 10px; }
.mini { display: flex; width: 56px; }
.collapse { margin: auto 9px 2px auto; }

.fbar { display: flex; align-items: flex-start; height: 59px; padding: 7px 8px 0; }
.namebox, .fxbox, .formula { border: 1px solid #d4d4d4; border-radius: 4px; background: #fff; }
.namebox { width: 102px; height: 26px; padding: 0 5px; justify-content: space-between; }
.dots { width: 4px; height: 16px; }
.fbar .dots { margin: 5px 8px; }
.fxbox { display: flex; align-items: center; justify-content: space-between; width: 86px; height: 26px; padding: 0 3px 0 6px; margin-right: 4px; }
.fx { font: italic bold 17px/20px "Liberation Serif", serif; color: #333; }
.formula { display: flex; flex: 1; height: 46px; align-items: flex-start; padding: 4px 4px 0 9px; }
.formula input { flex: 1; border: 0; padding: 0; height: 16px; }

.grid-area { display: flex; flex: 1; min-height: 0; overflow: hidden; }
.sheet { flex: 1; table-layout: fixed; border-spacing: 0; font: 13px/16px Lato, "Noto Sans", sans-serif; color: #000; background: #fff; height: max-content; width: 100px; }
.rowhead { width: 26px; }
.sheet th { padding: 0; font-weight: normal; text-align: center; vertical-align: bottom; color: #333; background: #f0f0f0; border: solid #c4c4c4; border-width: 0 1px 1px 0; height: 20px; }
.sheet thead th { background: #d2d2d2; color: #1e6b41; border-color: #b0b0b0; border-bottom: 2px solid #217346; }
.sheet thead .corner { background: linear-gradient(135deg, transparent 62%, #b4b4b4 62%) 8px 2px / 14px 14px no-repeat #f0f0f0; border-bottom-color: #f0f0f0; }
.sheet td { height: 20px; padding: 0 2px; vertical-align: bottom; white-space: nowrap; border: solid #e0e0e0; border-width: 0 1px 1px 0; }
.sheet .tall td, .sheet .tall th { height: 21px; }
.b { font-weight: bold; } .c { text-align: center; } .r { text-align: right; } .red { color: #f00; }
.sheet td.calc { background-color: #ffffcc; border-color: #ffffcc; }
.sheet td:has(+ .calc) { border-right-color: #ffffcc; }
.sheet td.last { border-bottom-color: #000; }
.sheet td.sum { padding-bottom: 1px; border-bottom-color: #fff; box-shadow: 0 1px #000, inset 0 -1px #000; }
.sheet td.flag { background: linear-gradient(135deg, #0a7d0a 4px, transparent 4px); }
.sheet td.box { border: 0 solid #000; border-width: 0 2px 2px 0; box-shadow: -2px -2px #000, 0 -2px #000; }
.pink { --fill: #ffccff; } .blue { --fill: #99ccff; } .slate { --fill: #8ea9db; } .yellow { --fill: #ffff00; }
.sheet td.box { background: var(--fill); }
.sheet .above td { border-bottom: 2px solid #217346; }
.sheet .above td.box { border-bottom-color: #217346; }
.sheet .picked th { background: #d3f0e0; color: #1e6b41; border-right: 2px solid #217346; }
.sheet .picked td { background-color: #c6c6c6; border-color: #ababab; }
.sheet .picked td.calc { background-color: #c5c59b; border-color: #c5c59b; }
.sheet .picked td:has(+ .calc) { border-right-color: #c5c59b; }
.sheet .picked td.active { background: #fff; }
.sheet .first td { box-shadow: inset 0 1px #fff; }
.sheet tr.final td { border-bottom: 2px solid #217346; box-shadow: inset 0 -1px #fff; }
.vscroll { display: flex; flex-direction: column; align-items: center; width: 21px; padding: 4px 0 1px; gap: 3px; }
.vthumb { width: 8px; height: 356px; border-radius: 4px; background: #707070; }
.vscroll .end { margin-top: auto; }

.sheet-tabs { display: flex; align-items: center; height: 32px; padding-left: 26px; border-top: 1px solid #d4d4d4; }
.sheet-tabs > button { margin-right: 20px; }
.sheet-tabs .tab-on { width: 70px; height: 30px; margin: -4px 4px 0 -6px; background: #fff; border-radius: 0 0 5px 5px; font-size: 13px; font-weight: 600; box-shadow: 0 1px 2px #bbb; }
.tab-on span { border-bottom: 2px solid #107c41; line-height: 20px; }
.tsep { width: 1px; height: 18px; background: #c8c8c8; }
.sheet-tabs .plus { margin-left: 41px; }
.hscroll { display: flex; align-items: center; gap: 13px; width: 548px; margin-left: auto; margin-right: 19px; }
.htrack { display: flex; align-items: center; flex: 1; height: 18px; border-radius: 9px; padding: 0 3px; background: #f6f6f6; gap: 4px; }
.hthumb { flex: 1; height: 8px; border-radius: 4px; background: #707070; margin-right: 15px; }
.xl-status { display: flex; align-items: center; height: 23px; padding: 0 19px 1px 12px; border-top: 1px solid #c8c8c8; background: #f3f3f3; font-size: 11px; color: #444; }
.ready { width: 50px; }
.acc { margin-left: 4px; font-weight: 600; }
.xl-stats { display: flex; gap: 20px; margin-left: auto; margin-right: 42px; }
.view { width: 40px; height: 21px; }
.view.on { background: #dedede; }
.xl-status .i8 { margin-left: 5px; }
.zoom { appearance: none; width: 101px; height: 14px; margin: 0 0 0 5px; background: linear-gradient(#666, #666) center / 100% 1px no-repeat; }
.zoom::-webkit-slider-thumb { appearance: none; width: 4px; height: 12px; background: #555; }
.pct { margin-left: 12px; }

/* Taskbar */
.taskbar { display: flex; height: 40px; background: linear-gradient(90deg, #1b1b25 0, #3a3026 20%, #37291f 50%, #1f1f20 70%, #22232a 100%); color: #fff; }
.start { width: 48px; background: #1b1b23; }
.tb-search { display: flex; align-items: center; gap: 10px; width: 288px; padding-left: 10px; margin-right: 2px; border: 1px solid #bbb; background: #f2f2f2; color: #333; font-size: 15px; }
.tb-search input { border: 0; background: none; width: 220px; padding: 0; }
.tb-search input::placeholder { color: #444; opacity: 1; }
.taskbar > button:not(.start) { width: 49px; border-bottom: 2px solid transparent; background-clip: padding-box; }
.taskbar > button:not(.start) svg { width: 24px; height: 24px; }
.taskbar > .run:not(.start) { background: linear-gradient(#76b9ed, #76b9ed) center bottom / 40px 2px no-repeat; border: 0; padding-bottom: 2px; }
.taskbar > .active:not(.start) { background: linear-gradient(#76b9ed, #76b9ed) center bottom / 48px 2px no-repeat #615750; }
.tray { display: flex; align-items: center; gap: 16px; margin-left: auto; padding-right: 4px; }
.tray > svg { width: 16px; height: 16px; }
.clock { display: flex; flex-direction: column; align-items: center; width: 48px; line-height: 18px; }
.notif { position: relative; width: 42px; height: 40px; padding: 12px 0 0 6px; border-right: 1px solid #777; }
.notif svg { width: 16px; height: 16px; }
.badge { position: absolute; left: 14px; top: 17px; width: 18px; height: 18px; border: 1px solid #999; border-radius: 50%; background: #2b2b2f; font-size: 11px; line-height: 16px; text-align: center; }
```
